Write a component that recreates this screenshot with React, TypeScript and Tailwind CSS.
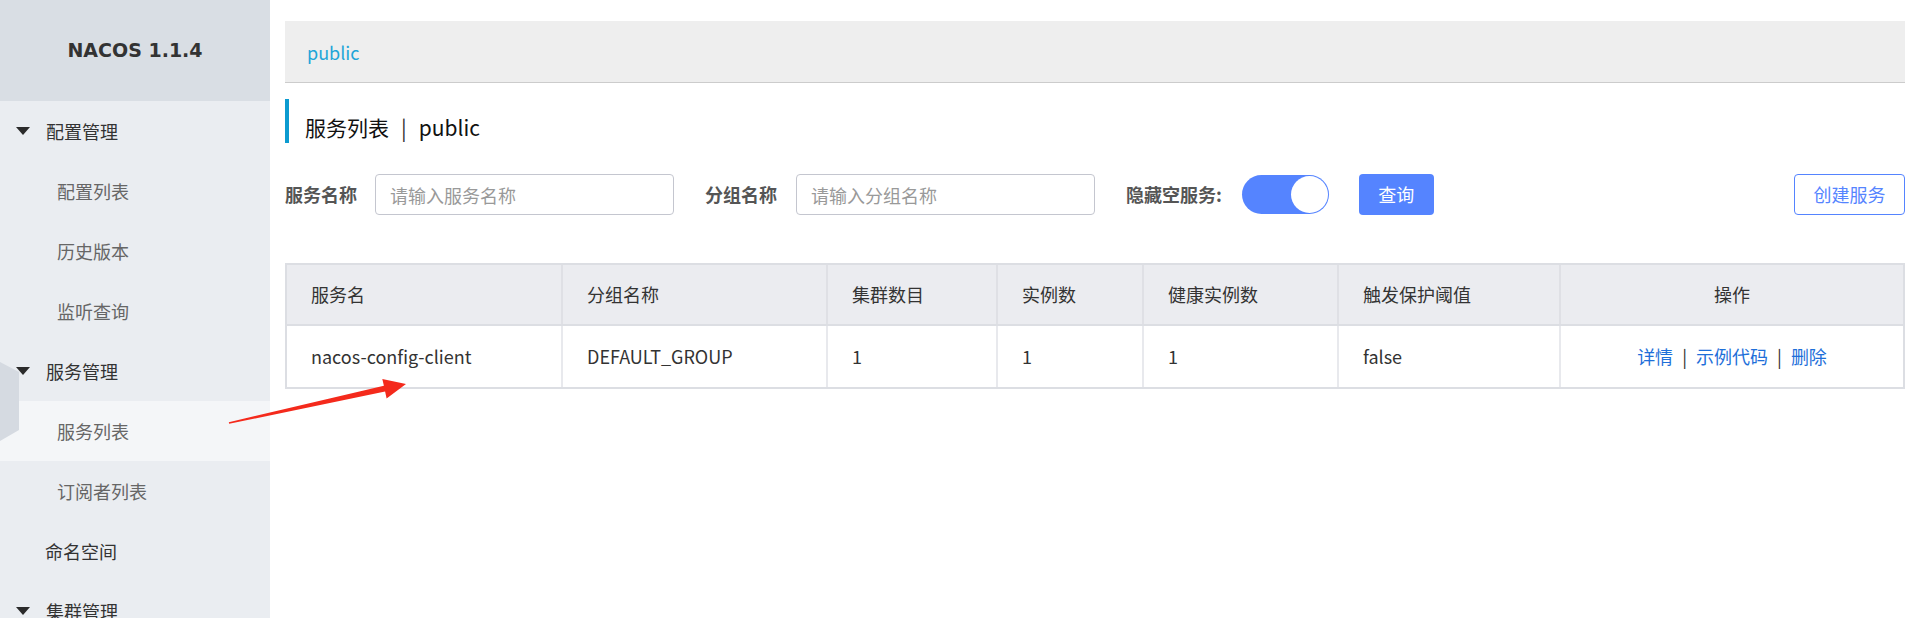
import React from 'react';

const menu = [
  { label: '配置管理', group: true },
  { label: '配置列表' },
  { label: '历史版本' },
  { label: '监听查询' },
  { label: '服务管理', group: true },
  { label: '服务列表', active: true },
  { label: '订阅者列表' },
  { label: '命名空间', top: true },
  { label: '集群管理', group: true },
];

const columns = ['服务名', '分组名称', '集群数目', '实例数', '健康实例数', '触发保护阈值', '操作'];
const row = ['nacos-config-client', 'DEFAULT_GROUP', '1', '1', '1', 'false'];

function Caret() {
  return (
    <svg width="14" height="8" viewBox="0 0 14 8" className="shrink-0">
      <polygon points="0,0 14,0 7,8" fill="#2b2b2b" />
    </svg>
  );
}

export default function App() {
  return (
    <div
      className="relative flex w-[1919px] h-[618px] overflow-hidden bg-white"
      style={{ fontFamily: "'Noto Sans CJK SC', sans-serif" }}
    >
      {/* Sidebar */}
      <aside className="w-[270px] shrink-0 bg-[#eaedf1] flex flex-col">
        <div className="h-[101px] shrink-0 bg-[#d9dee4] flex items-center justify-center">
          <span className="text-[19px] font-bold text-[#333] font-['DejaVu_Sans',sans-serif]">NACOS 1.1.4</span>
        </div>
        {menu.map((m) => (
          <div
            key={m.label}
            className={`h-[60px] shrink-0 flex items-center text-[18px] leading-none ${m.active ? 'bg-[#f4f6f8]' : ''}`}
          >
            {m.group ? (
              <div className="flex items-center pl-[16px] gap-[16px] text-[#333]">
                <Caret />
                <span>{m.label}</span>
              </div>
            ) : m.top ? (
              <span className="pl-[45px] text-[#333]">{m.label}</span>
            ) : (
              <span className="pl-[57px] text-[#666]">{m.label}</span>
            )}
          </div>
        ))}
      </aside>

      {/* Main */}
      <main className="flex-1 pl-[15px] pr-[14px] pt-[21px]">
        <div className="h-[62px] bg-[#eeeeee] border-b-[1.5px] border-[#cccccc] pl-[22px] flex items-center">
          <span className="text-[18px] text-[#1fa5d8] leading-none">public</span>
        </div>

        <div className="mt-[16px] h-[44px] border-l-4 border-[#0c9bd0] pl-[16px] pt-[12px] flex items-center text-[21px] text-[#111] leading-none">
          <span>服务列表</span>
          <span className="mx-[12px] text-[#333]">|</span>
          <span>public</span>
        </div>

        <div className="mt-[31px] h-[41px] flex items-center text-[18px]">
          <label className="font-bold text-[#555] w-[72px] whitespace-nowrap">服务名称</label>
          <input
            className="ml-[18px] w-[299px] h-[41px] border border-[#c4c6cf] rounded-[4px] px-[14px] text-[18px] outline-none placeholder:text-[#999]"
            placeholder="请输入服务名称"
          />
          <label className="ml-[31px] font-bold text-[#555] whitespace-nowrap">分组名称</label>
          <input
            className="ml-[19px] w-[299px] h-[41px] border border-[#c4c6cf] rounded-[4px] px-[14px] text-[18px] outline-none placeholder:text-[#999]"
            placeholder="请输入分组名称"
          />
          <label className="ml-[31px] font-bold text-[#555] whitespace-nowrap">隐藏空服务:</label>
          <div className="ml-[20px] w-[87px] h-[39px] rounded-full bg-[#5584ff] flex items-center justify-end px-[1px]">
            <div className="w-[37px] h-[37px] rounded-full bg-white" />
          </div>
          <button className="ml-[30px] w-[75px] h-[41px] rounded-[4px] bg-[#5584ff] text-white text-[18px]">查询</button>
          <button className="ml-auto w-[111px] h-[41px] rounded-[4px] border border-[#5584ff] text-[#5584ff] text-[18px] bg-white">
            创建服务
          </button>
        </div>

        {/* Table */}
        <div className="mt-[48px] border-2 border-[#dcdee3] text-[18px] text-[#333]">
          <div className="grid grid-cols-[276px_265px_170px_146px_195px_222px_1fr] h-[61px] bg-[#ebecf0] border-b-2 border-[#dcdee3]">
            {columns.map((c, i) => (
              <div
                key={c}
                className={`flex items-center px-[24px] border-[#dfe0e5] ${i < 6 ? 'border-r-2' : 'justify-center'}`}
              >
                {c}
              </div>
            ))}
          </div>
          <div className="grid grid-cols-[276px_265px_170px_146px_195px_222px_1fr] h-[61px]">
            {row.map((c, i) => (
              <div key={i} className="flex items-center px-[24px] border-r-2 border-[#e8e9ed]">
                {c}
              </div>
            ))}
            <div className="flex items-center justify-center text-[#1e6fd9]">
              <span>详情</span>
              <span className="mx-[9px] text-[#333]">|</span>
              <span>示例代码</span>
              <span className="mx-[9px] text-[#333]">|</span>
              <span>删除</span>
            </div>
          </div>
        </div>
      </main>

      {/* Decorations over the page */}
      <svg className="absolute left-0 top-0 pointer-events-none" width="1919" height="618">
        <polygon points="0,362 19,372 19,430 0,441" fill="#d5dae1" />
        <polygon
          points="228.8,422.2 383.9,385.8 382.3,378.9 406,384 386.6,398.5 385.1,391.6 229.2,423.8"
          fill="#f42a1c"
        />
      </svg>
    </div>
  );
}
